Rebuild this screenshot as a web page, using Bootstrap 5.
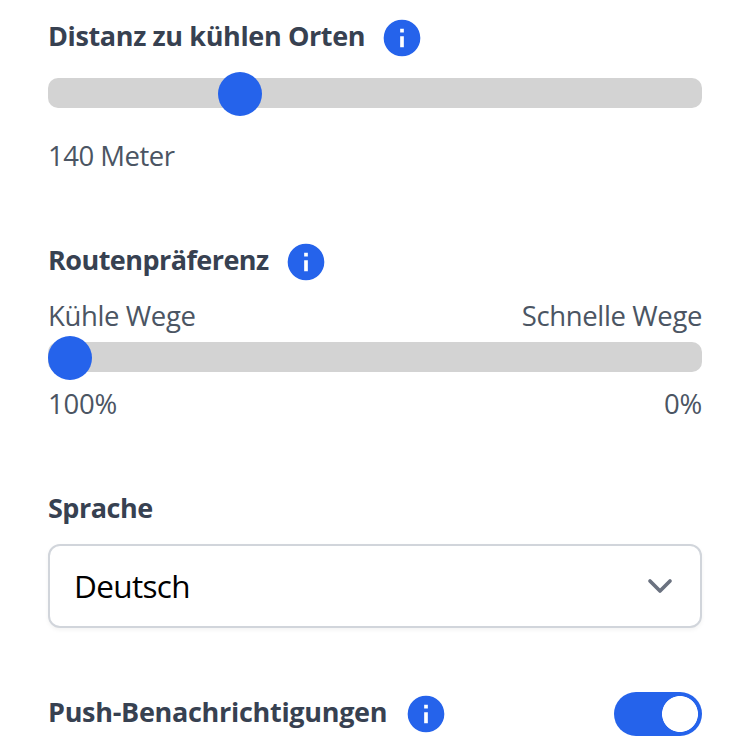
<!DOCTYPE html>
<html lang="de">
<head>
<meta charset="utf-8">
<meta name="viewport" content="width=device-width, initial-scale=1">
<title>Einstellungen</title>
<link rel="stylesheet" href="https://cdn.jsdelivr.net/npm/bootstrap@5.3.0/dist/css/bootstrap.min.css">
<style>
  body { font-family: "Open Sans", "Noto Sans", sans-serif; font-size: 27.5px; line-height: 40px; color: #4b5563; background: #fff; overflow: hidden; }
  .settings { padding: 16px 48px 0; height: 750px; }
  .setting-title { font-size: 27px; font-weight: 700; line-height: 40px; color: #374151; letter-spacing: -.38px; white-space: nowrap; }
  .setting-head { height: 44px; }
  .setting-head .setting-title { margin-bottom: 4px; }
  .info { width: 44px; height: 44px; fill: #2563eb; }
  .t-distance { width: 316px; }
  .t-route { width: 220px; letter-spacing: -.55px; }
  .t-lang { letter-spacing: -.5px; }
  .t-push { width: 340px; letter-spacing: -.3px; }
  .tight-1 { letter-spacing: -.25px; }
  .tight-2 { letter-spacing: -.38px; }
  .tight-3 { letter-spacing: -.5px; }
  .form-range.slider { height: 44px; }
  .slider::-webkit-slider-runnable-track { height: 30px; background: #d3d3d3; border-radius: 10px; }
  .slider::-webkit-slider-thumb { width: 44px; height: 44px; margin-top: -6px; background: #2563eb; border-radius: 50%; box-shadow: none; }
  .slider::-moz-range-track { height: 30px; background: #d3d3d3; border-radius: 10px; }
  .slider::-moz-range-thumb { width: 44px; height: 44px; background: #2563eb; border-radius: 50%; }
  .slider-distance { margin-top: 11px; }
  .slider-route { margin-top: -1px; margin-bottom: 5px; }
  .gap-value { margin-top: 21px; }
  .gap-route { margin-top: 64px; }
  .gap-ends { margin-top: 12px; }
  .gap-lang { margin-top: 64px; }
  .lang-box { height: 84px; margin-top: 16px; padding: 0 16px 0 24px; border: 2px solid #d1d5db; border-radius: 12px; font-size: 31.5px; letter-spacing: -.65px; color: #000; box-shadow: 0 2px 4px rgba(0,0,0,.05); }
  .chevron { width: 48px; height: 48px; fill: none; stroke: #6b7280; stroke-width: 3.7; stroke-linecap: round; stroke-linejoin: round; }
  .gap-push { margin-top: 64px; }
  .form-check-input.toggle { width: 88px; height: 44px; margin: 0; border: 0; background-color: #2563eb; }
  .form-check-input.toggle:checked { background-color: #2563eb; background-image: radial-gradient(circle closest-side, #fff 17.6px, transparent 18.3px); background-size: 44px 44px; background-position: right center; }
</style>
</head>
<body>
<svg class="d-none" aria-hidden="true">
  <symbol id="info" viewBox="0 0 24 24"><path d="M12 2a10 10 0 1 0 0 20 10 10 0 0 0 0-20zm1 15h-2v-6h2v6zm0-8h-2V7h2v2z"/></symbol>
</svg>
<main class="settings d-flex flex-column">
  <section>
    <div class="setting-head d-flex align-items-center gap-3">
      <label class="setting-title t-distance" for="distance">Distanz zu kühlen Orten</label>
      <svg class="info"><use href="#info"/></svg>
    </div>
    <input id="distance" type="range" class="form-range slider slider-distance d-block" min="0" max="610" value="170">
    <div class="gap-value tight-3">140 Meter</div>
  </section>
  <section class="gap-route">
    <div class="setting-head d-flex align-items-center gap-3">
      <label class="setting-title t-route" for="route">Routenpräferenz</label>
      <svg class="info"><use href="#info"/></svg>
    </div>
    <div class="gap-ends d-flex justify-content-between tight-2"><span>Kühle Wege</span><span>Schnelle Wege</span></div>
    <input id="route" type="range" class="form-range slider slider-route d-block" min="0" max="100" value="0">
    <div class="d-flex justify-content-between tight-1"><span>100%</span><span>0%</span></div>
  </section>
  <section class="gap-lang">
    <div class="setting-title t-lang">Sprache</div>
    <div class="lang-box d-flex align-items-center justify-content-between bg-white" role="combobox" tabindex="0">
      <span>Deutsch</span>
      <svg class="chevron" viewBox="0 0 48 48"><path d="M14 19l10 10 10-10"/></svg>
    </div>
  </section>
  <section class="gap-push d-flex justify-content-between align-items-center">
    <div class="setting-head d-flex align-items-center gap-3">
      <label class="setting-title t-push" for="push">Push-Benachrichtigungen</label>
      <svg class="info"><use href="#info"/></svg>
    </div>
    <div class="form-switch p-0 d-flex"><input id="push" class="form-check-input toggle" type="checkbox" role="switch" checked></div>
  </section>
</main>
<script src="https://cdn.jsdelivr.net/npm/bootstrap@5.3.0/dist/js/bootstrap.bundle.min.js"></script>
</body>
</html>
